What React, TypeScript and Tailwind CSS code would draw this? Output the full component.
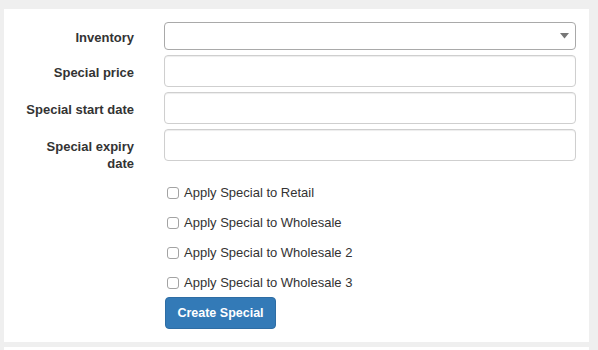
const font = { fontFamily: '"Liberation Sans", Arial, Helvetica, sans-serif' }

const fields = [
  { label: 'Special price' },
  { label: 'Special start date' },
  { label: 'Special expiry date' },
]

const checks = [
  'Apply Special to Retail',
  'Apply Special to Wholesale',
  'Apply Special to Wholesale 2',
  'Apply Special to Wholesale 3',
]

export default function App() {
  return (
    <div className="h-[350px] w-[598px] overflow-hidden bg-[#efefef] pt-[9px] text-[13px] text-[#333]" style={font}>
      <div className="ml-[4px] w-[585px] bg-white pb-[13px] pr-[13px] pt-[13px]">
        <div className="mb-[5px] flex items-start">
          <div className="w-[130px] shrink-0 pl-[18px]">
            <label className="block pt-[7px] text-right font-bold leading-[17px]">Inventory</label>
          </div>
          <div className="ml-[30px] flex h-[28px] flex-1 items-center justify-end rounded-[4px] border border-[#a9a9a9] bg-white pr-[6px]">
            <svg width="9" height="6" viewBox="0 0 9 6">
              <path d="M0 0h9L4.5 5.5z" fill="#777" />
            </svg>
          </div>
        </div>
        {fields.map((f) => (
          <div key={f.label} className="mb-[5px] flex items-start">
            <div className="w-[130px] shrink-0 pl-[18px]">
              <label className="block pt-[9px] text-right font-bold leading-[17px]">{f.label}</label>
            </div>
            <input
              type="text"
              className="ml-[30px] h-[32px] flex-1 rounded-[4px] border border-[#cfcfcf] bg-white shadow-[inset_0_1px_1px_rgba(0,0,0,0.075)] outline-none"
            />
          </div>
        ))}
        <div className="ml-[163px] mt-[11px] flex flex-col gap-[10px]">
          {checks.map((c) => (
            <label key={c} className="flex h-[20px] items-center">
              <span className="h-[12px] w-[12px] rounded-[3px] border border-[#a3a3a3] bg-white" />
              <span className="ml-[5px]">{c}</span>
            </label>
          ))}
        </div>
        <button className="ml-[161px] mt-[4px] h-[32px] w-[111px] rounded-[4px] border border-[#2e6da4] bg-[#337ab7] text-[12.5px] font-bold text-white">
          Create Special
        </button>
      </div>
      <div className="ml-[4px] mt-[5px] h-[10px] w-[585px] bg-white" />
    </div>
  )
}
